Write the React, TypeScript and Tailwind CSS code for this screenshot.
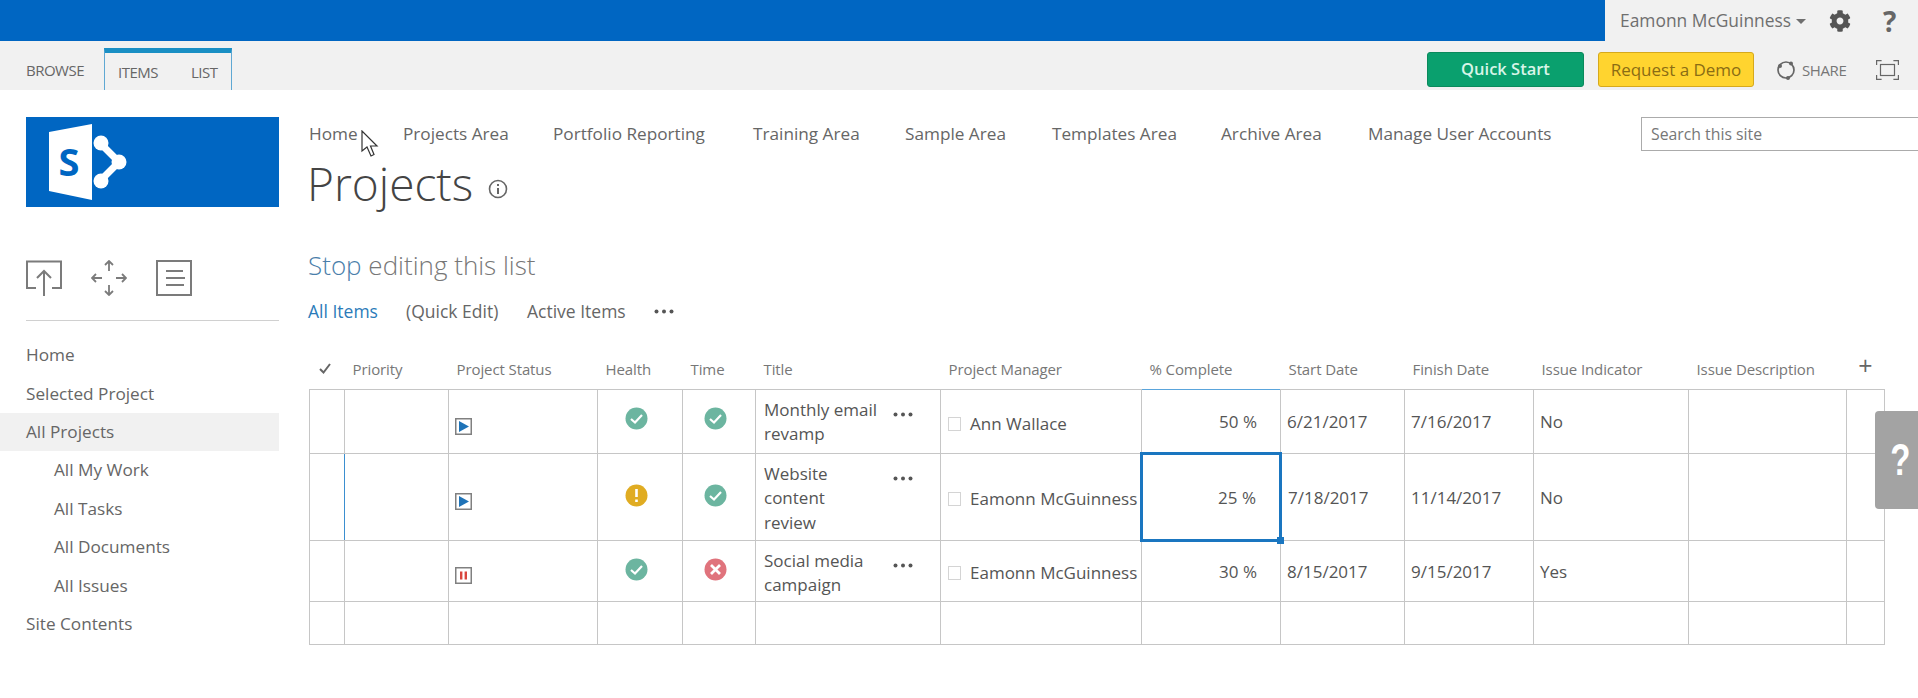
import { FaCog } from "react-icons/fa";

const FONT = "font-['Open_Sans',sans-serif]";

const topNav = [
  { label: "Home", cls: "w-[94px]" },
  { label: "Projects Area", cls: "w-[150px]" },
  { label: "Portfolio Reporting", cls: "w-[200px]" },
  { label: "Training Area", cls: "w-[152px]" },
  { label: "Sample Area", cls: "w-[147px]" },
  { label: "Templates Area", cls: "w-[169px]" },
  { label: "Archive Area", cls: "w-[147px]" },
  { label: "Manage User Accounts", cls: "w-[273px]" },
];

const sideNav = [
  { label: "Home" },
  { label: "Selected Project" },
  { label: "All Projects", active: true },
  { label: "All My Work", sub: true },
  { label: "All Tasks", sub: true },
  { label: "All Documents", sub: true },
  { label: "All Issues", sub: true },
  { label: "Site Contents" },
];

const columns = [
  { label: "", cls: "w-[35px]" },
  { label: "Priority", cls: "w-[104px]" },
  { label: "Project Status", cls: "w-[149px]" },
  { label: "Health", cls: "w-[85px]" },
  { label: "Time", cls: "w-[73px]" },
  { label: "Title", cls: "w-[185px]" },
  { label: "Project Manager", cls: "w-[201px]" },
  { label: "% Complete", cls: "w-[139px]" },
  { label: "Start Date", cls: "w-[124px]" },
  { label: "Finish Date", cls: "w-[129px]" },
  { label: "Issue Indicator", cls: "w-[155px]" },
  { label: "Issue Description", cls: "w-[158px]" },
  { label: "", cls: "w-[38px]" },
];

const rows = [
  {
    status: "play",
    health: "ok",
    time: "ok",
    title: ["Monthly email", "revamp"],
    manager: "Ann Wallace",
    pct: "50 %",
    start: "6/21/2017",
    finish: "7/16/2017",
    issue: "No",
    h: "h-[64px]",
    first: true,
  },
  {
    status: "play",
    health: "warn",
    time: "ok",
    title: ["Website", "content", "review"],
    manager: "Eamonn McGuinness",
    pct: "25 %",
    start: "7/18/2017",
    finish: "11/14/2017",
    issue: "No",
    h: "h-[87px]",
    selected: true,
  },
  {
    status: "pause",
    health: "ok",
    time: "bad",
    title: ["Social media", "campaign"],
    manager: "Eamonn McGuinness",
    pct: "30 %",
    start: "8/15/2017",
    finish: "9/15/2017",
    issue: "Yes",
    h: "h-[61px]",
  },
];

const Dots = ({ className = "" }: { className?: string }) => (
  <svg width="20" height="5" viewBox="0 0 20 5" fill="#555" className={`block shrink-0 ${className}`}>
    <circle cx="2.5" cy="2.5" r="2" />
    <circle cx="10" cy="2.5" r="2" />
    <circle cx="17.5" cy="2.5" r="2" />
  </svg>
);

const StatusIcon = ({ kind }: { kind: string }) => (
  <svg width="17" height="17" viewBox="0 0 17 17" className="block">
    <rect x="0.75" y="0.75" width="15.5" height="15.5" fill="#fff" stroke="#808080" strokeWidth="1.5" />
    {kind === "play" ? (
      <path d="M4 3 L14 8.5 L4 14 Z" fill="#1f73b7" />
    ) : (
      <path d="M5 4.5h2.4v8H5zM9.6 4.5H12v8H9.6z" fill="#d9463e" />
    )}
  </svg>
);

const KpiIcon = ({ kind }: { kind: string }) => {
  const fill = kind === "ok" ? "#6cb5a0" : kind === "warn" ? "#e0ac22" : "#e0737c";
  return (
    <svg width="23" height="23" viewBox="0 0 23 23" className="block">
      <circle cx="11.5" cy="11.5" r="11" fill={fill} />
      {kind === "ok" && <path d="M6 12 L10 15.5 L17 8" fill="none" stroke="#fff" strokeWidth="2.2" />}
      {kind === "warn" && <path d="M11.5 5v8M11.5 15.5v2.5" fill="none" stroke="#fff" strokeWidth="2.6" />}
      {kind === "bad" && <path d="M7 7 L16 16 M16 7 L7 16" fill="none" stroke="#fff" strokeWidth="2.8" />}
    </svg>
  );
};

const Logo = () => (
  <svg width="253" height="90" viewBox="0 0 253 90" className="block bg-[#0066c2]">
    <path d="M23 15 L66 7 L66 83 L23 74 Z" fill="#fff" />
    <text x="43" y="58.5" textAnchor="middle" fontFamily="Open Sans, sans-serif" fontWeight="700" fontSize="38" fill="#0066c2">
      S
    </text>
    <path d="M74 26 L93 45 L74 64" fill="none" stroke="#fff" strokeWidth="7" />
    <circle cx="75" cy="26" r="7.5" fill="#fff" />
    <circle cx="93" cy="45" r="7.5" fill="#fff" />
    <circle cx="75" cy="64" r="7.5" fill="#fff" />
  </svg>
);

const SideIcons = () => (
  <div className="flex h-[36px] items-center gap-[29px]">
    <svg width="36" height="36" viewBox="0 0 36 36" fill="none" stroke="#7b7b7b" strokeWidth="2">
      <path d="M10 28H1V1.5h34V28h-9" />
      <path d="M18 36V11M11 18l7-7 7 7" />
    </svg>
    <svg width="36" height="36" viewBox="0 0 36 36" fill="none" stroke="#7b7b7b" strokeWidth="1.8">
      <path d="M18 1v10M14 5l4-4 4 4M18 25v10M14 31l4 4 4-4M1 18h10M5 14l-4 4 4 4M25 18h10M31 14l4 4-4 4" />
    </svg>
    <svg width="36" height="36" viewBox="0 0 36 36" fill="none" stroke="#7b7b7b" strokeWidth="2">
      <rect x="1" y="1" width="34" height="34" />
      <path d="M10 11h17M10 18h19M10 25h18" />
    </svg>
  </div>
);

const Cursor = () => (
  <svg width="18" height="28" viewBox="0 0 18 28" className="absolute left-[361px] top-[130px]">
    <path d="M1 1 L1 21 L6 17 L10 26 L13 24.5 L9.5 16 L16 16 Z" fill="#fff" stroke="#333" strokeWidth="1.2" />
  </svg>
);

export default function App() {
  return (
    <div className={`${FONT} relative h-[698px] w-[1918px] overflow-hidden bg-white text-[#666]`}>
      {/* suite bar */}
      <div className="flex h-[41px] bg-[#f1f1f1]">
        <div className="w-[1605px] bg-[#0066c2]" />
        <div className="flex flex-1 items-center pl-[15px]">
          <span className="text-[17.4px] text-[#6f6f6f]">Eamonn McGuinness</span>
          <span className="ml-[5px] mt-[2px] h-0 w-0 border-x-[5px] border-t-[5px] border-x-transparent border-t-[#6f6f6f]" />
          <FaCog className="ml-[23px] text-[22px] text-[#555]" />
          <span className="ml-[32px] text-[28px] font-bold leading-none text-[#666]">?</span>
        </div>
      </div>

      {/* ribbon */}
      <div className="flex h-[49px] items-end bg-[#f1f1f1] pl-[26px]">
        <span className="mb-[9px] w-[78px] text-[15px] tracking-[-0.5px] text-[#666]">BROWSE</span>
        <div className="flex h-[42px] w-[128px] items-center gap-[33px] border-x border-t-[5px] border-x-[#5fa8d3] border-t-[#1a8fc4] pl-[13px] pt-[1px] text-[15px] tracking-[-0.5px] text-[#666]">
          <span>ITEMS</span>
          <span>LIST</span>
        </div>
        <div className="flex h-full flex-1 items-start pl-[1195px] pt-[11px]">
          <button className="h-[35px] w-[157px] rounded-[3px] border border-[#0a8a5c] bg-[#0aa06e] text-[16.5px] font-semibold text-[#d8f5e8]">
            Quick Start
          </button>
          <button className="ml-[14px] h-[35px] w-[156px] whitespace-nowrap rounded-[3px] border border-[#d6a91c] bg-[#ffd42f] text-[17px] text-[#8a6c14]">
            Request a Demo
          </button>
          <div className="ml-[22px] flex h-[36px] items-center">
            <svg width="20" height="20" viewBox="0 0 20 20" fill="none" stroke="#666" strokeWidth="1.7">
              <circle cx="10" cy="10" r="8" />
              <circle cx="4" cy="6" r="2" fill="#666" stroke="none" />
              <circle cx="15" cy="3.5" r="2" fill="#666" stroke="none" />
              <circle cx="12" cy="18" r="2" fill="#666" stroke="none" />
            </svg>
            <span className="ml-[6px] text-[15px] tracking-[-0.4px] text-[#777]">SHARE</span>
            <svg width="23" height="20" viewBox="0 0 23 20" fill="none" stroke="#666" strokeWidth="1.2" className="ml-[30px]">
              <rect x="4.5" y="4.5" width="14" height="11" />
              <path d="M.6 5V.6h5M17.4.6h5V5M.6 15v4.4h5M17.4 19.4h5V15" />
            </svg>
          </div>
        </div>
      </div>

      <div className="flex pt-[27px]">
        {/* left nav */}
        <aside className="w-[279px] shrink-0">
          <div className="pl-[26px]">
            <Logo />
            <div className="mt-[53px]">
              <SideIcons />
            </div>
            <div className="mt-[24px] h-px bg-[#d0d0d0]" />
          </div>
          <nav className="mt-[15px]">
            {sideNav.map((item) => (
              <div
                key={item.label}
                className={`flex h-[38.4px] items-center text-[17.2px] text-[#666] ${
                  item.sub ? "pl-[54px]" : "pl-[26px]"
                } ${item.active ? "bg-[#f1f1f1]" : ""}`}
              >
                {item.label}
              </div>
            ))}
          </nav>
        </aside>

        {/* main area */}
        <main className="min-w-0 flex-1 pl-[30px]">
          <div className="flex h-[34px] items-start">
            <div className="flex h-[34px] items-center whitespace-nowrap text-[17.2px] text-[#666]">
              {topNav.map((n) => (
                <span key={n.label} className={n.cls}>
                  {n.label}
                </span>
              ))}
            </div>
            <div className="flex h-[34px] w-[320px] shrink-0 items-center border border-[#ababab] pl-[9px] pt-[2px] text-[15.8px] text-[#777]">
              Search this site
            </div>
          </div>

          <div className="flex h-[62px] items-center pt-[2px]">
            <h1 className="ml-[-2px] text-[46px] font-light leading-none text-[#444]">Projects</h1>
            <svg width="20" height="20" viewBox="0 0 20 20" className="ml-[15px] mt-[12px]" fill="none" stroke="#666">
              <circle cx="10" cy="10" r="8.5" strokeWidth="1.6" />
              <path d="M10 9v6M10 5v2" strokeWidth="2" />
            </svg>
          </div>

          <div className="ml-[-1px] mt-[36px] text-[26px] font-light leading-[32px] text-[#777]">
            <span className="text-[#4a7eaa]">Stop</span> editing this list
          </div>

          <div className="ml-[-1px] mt-[16px] flex h-[28px] items-center text-[17.5px] text-[#666]">
            <span className="w-[98px] text-[#2b7bb9]">All Items</span>
            <span className="w-[121px]">(Quick Edit)</span>
            <span className="w-[127px]">Active Items</span>
            <Dots />
          </div>

          <table className="mt-[26px] table-fixed border-collapse">
            <colgroup>
              {columns.map((c, i) => (
                <col key={i} className={c.cls} />
              ))}
            </colgroup>
            <thead>
              <tr className="h-[38px]">
                <th className="p-0 pb-[2px] align-middle">
                  <svg width="12" height="11" viewBox="0 0 12 11" fill="none" stroke="#666" strokeWidth="2" className="ml-[9px] block">
                    <path d="M1 6 L4.5 9.5 L11 1" />
                  </svg>
                </th>
                {columns.slice(1, 12).map((c) => (
                  <th
                    key={c.label}
                    className="truncate px-[8px] pb-[2px] text-left align-middle text-[15px] font-normal tracking-[-0.1px] text-[#777]"
                  >
                    {c.label}
                  </th>
                ))}
                <th className="p-0 pb-[8px] text-center align-middle text-[25px] font-normal leading-none text-[#666]">+</th>
              </tr>
            </thead>
            <tbody className="text-[17px] text-[#555]">
              {rows.map((r) => (
                <tr key={r.manager + r.pct} className={r.h}>
                  <td className={`border border-[#c6c6c6] ${r.selected ? "border-r-[#3b8fd0]" : ""}`} />
                  <td className="border border-[#c6c6c6]" />
                  <td className="border border-[#c6c6c6] px-[6px] align-middle">
                    <div className="pt-[10px]">
                      <StatusIcon kind={r.status} />
                    </div>
                  </td>
                  <td className="border border-[#c6c6c6] align-top">
                    <div className={`flex justify-center pr-[8px] ${r.selected ? "pt-[30px]" : "pt-[17px]"}`}>
                      <KpiIcon kind={r.health} />
                    </div>
                  </td>
                  <td className="border border-[#c6c6c6] align-top">
                    <div className={`flex justify-center pr-[8px] ${r.selected ? "pt-[30px]" : "pt-[17px]"}`}>
                      <KpiIcon kind={r.time} />
                    </div>
                  </td>
                  <td className="border border-[#c6c6c6] pl-[8px] pt-[8px] align-top">
                    <div className="flex items-start justify-between pr-[27px] leading-[24.5px]">
                      <div>
                        {r.title.map((t) => (
                          <div key={t}>{t}</div>
                        ))}
                      </div>
                      <Dots className="mt-[14px]" />
                    </div>
                  </td>
                  <td className="border border-[#c6c6c6] pl-[7px] pt-[5px] align-middle">
                    <div className="flex items-center whitespace-nowrap">
                      <span className="h-[14px] w-[13px] shrink-0 border border-[#d4d4d4]" />
                      <span className="ml-[9px]">{r.manager}</span>
                    </div>
                  </td>
                  <td
                    className={`pr-[23px] pt-[2px] text-right align-middle ${
                      r.selected ? "relative border-[3px] border-[#1a76c0]" : "border border-[#c6c6c6]"
                    } ${r.first ? "border-t-[#5aa5dc]" : ""}`}
                  >
                    {r.pct}
                    {r.selected && <span className="absolute bottom-[-5px] right-[-5px] h-[7px] w-[7px] bg-[#1a76c0]" />}
                  </td>
                  <td className="border border-[#c6c6c6] pl-[6px] pt-[2px] align-middle">{r.start}</td>
                  <td className="border border-[#c6c6c6] pl-[6px] pt-[2px] align-middle">{r.finish}</td>
                  <td className="border border-[#c6c6c6] pl-[6px] pt-[2px] align-middle">{r.issue}</td>
                  <td className="border border-[#c6c6c6]" />
                  <td className="border border-[#c6c6c6]" />
                </tr>
              ))}
              <tr className="h-[43px]">
                {columns.map((_, i) => (
                  <td key={i} className="border border-[#c6c6c6]" />
                ))}
              </tr>
            </tbody>
          </table>
        </main>
      </div>

      <Cursor />

      {/* help tab */}
      <div className="absolute right-0 top-[411px] flex h-[98px] w-[43px] items-center justify-center rounded-l-[4px] bg-[#a3a3a3] pl-[8px] font-['Liberation_Sans',sans-serif] text-[44px] font-bold text-white">
        <span className="inline-block scale-x-75">?</span>
      </div>
    </div>
  );
}
